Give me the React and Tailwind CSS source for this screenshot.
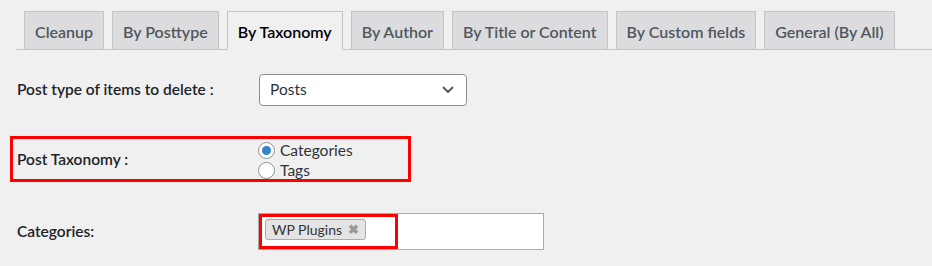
import React, { useState } from 'react';

const tabs = [
  'Cleanup',
  'By Posttype',
  'By Taxonomy',
  'By Author',
  'By Title or Content',
  'By Custom fields',
  'General (By All)'
];

const Radio = ({ checked, label, onClick }) => (
  <label className="flex items-center h-[20px] cursor-pointer" onClick={onClick}>
    <span className="w-[17px] h-[17px] rounded-full border border-[#8c8f94] bg-white flex items-center justify-center">
      {checked && <span className="w-[9px] h-[9px] rounded-full bg-[#3582c4]" />}
    </span>
    <span className="ml-[5px] text-[15.5px] text-[#2c3338]">{label}</span>
  </label>
);

const App = () => {
  const [active, setActive] = useState('By Taxonomy');
  const [taxonomy, setTaxonomy] = useState('categories');

  return (
    <div
      className="w-[932px] h-[266px] bg-[#f0f0f1] pt-[11px] overflow-hidden"
      style={{ fontFamily: 'Lato, "Noto Sans", sans-serif' }}
    >
      {/* tabs */}
      <div className="ml-4 flex border-b border-[#c3c4c7] h-[39px]">
        {tabs.map(t => (
          <button
            key={t}
            onClick={() => setActive(t)}
            className={`ml-2 h-[39px] px-[10px] pt-[2px] border border-[#c3c4c7] text-[16px] font-semibold leading-none ${
              active === t
                ? 'bg-[#f0f0f1] text-black border-b-[#f0f0f1]'
                : 'bg-[#dcdcde] text-[#50575e]'
            }`}
          >
            {t}
          </button>
        ))}
      </div>

      {/* post type */}
      <div className="mt-[24px] pl-[17px] flex items-center h-[32px]">
        <div className="w-[242px] text-[15.5px] font-semibold text-[#1d2327]">Post type of items to delete :</div>
        <div className="w-[208px] h-[32px] bg-white border border-[#8c8f94] rounded-[4px] flex items-center justify-between pl-[10px] pr-[12px]">
          <span className="text-[15.5px] text-[#2c3338]">Posts</span>
          <svg width="12" height="8" viewBox="0 0 12 8" fill="none">
            <path d="M1.5 1.5 L6 6 L10.5 1.5" stroke="#50575e" strokeWidth="1.8" strokeLinecap="round" strokeLinejoin="round" />
          </svg>
        </div>
      </div>

      {/* taxonomy (highlighted) */}
      <div className="mt-[30px] ml-[10px] w-[401px] h-[46px] border-[3px] border-[#ff0000] pl-[4px] flex items-center">
        <div className="w-[241px] text-[15.5px] font-semibold text-[#1d2327] mt-[1px]">Post Taxonomy :</div>
        <div className="flex flex-col mt-[3px]">
          <Radio checked={taxonomy === 'categories'} label="Categories" onClick={() => setTaxonomy('categories')} />
          <Radio checked={taxonomy === 'tags'} label="Tags" onClick={() => setTaxonomy('tags')} />
        </div>
      </div>

      {/* categories */}
      <div className="mt-[31px] pl-[17px] flex items-center h-[37px]">
        <div className="w-[241px] text-[15.5px] font-semibold text-[#1d2327]">Categories:</div>
        <div className="relative w-[286px] h-[37px] bg-white border border-[#aaaaaa] flex items-start pt-[5px] pl-[6px]">
          <span className="h-[21px] flex items-center bg-[#e4e4e4] border border-[#aaaaaa] rounded-[3px] pl-[6px] pr-[6px] text-[14px] text-[#333]">
            WP Plugins
            <span className="ml-[6px] text-[#999] text-[13px] font-bold">✖</span>
          </span>
          <div className="absolute left-0 top-0 w-[139px] h-[35px] border-[3px] border-[#ff0000]" />
        </div>
      </div>
    </div>
  );
};

export default App;
